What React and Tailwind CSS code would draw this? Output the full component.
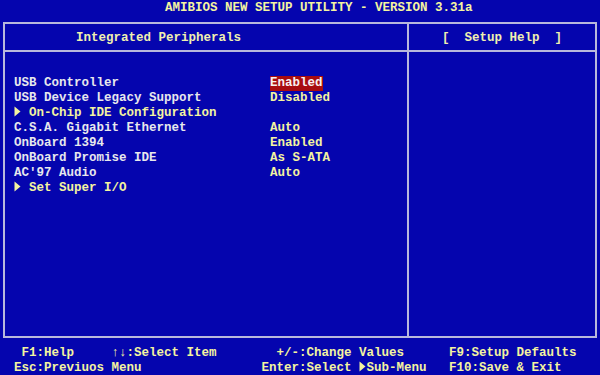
import React from 'react';

const items = [
    { label: 'USB Controller', value: 'Enabled', selected: true },
    { label: 'USB Device Legacy Support', value: 'Disabled' },
    { label: 'On-Chip IDE Configuration', submenu: true },
    { label: 'C.S.A. Gigabit Ethernet', value: 'Auto' },
    { label: 'OnBoard 1394', value: 'Enabled' },
    { label: 'OnBoard Promise IDE', value: 'As S-ATA' },
    { label: "AC'97 Audio", value: 'Auto' },
    { label: 'Set Super I/O', submenu: true },
];

function Arrow() {
    return (
        <span className="inline-block w-[1ch] align-middle">
            <svg width="7" height="11" viewBox="0 0 7 11" className="block -mt-[2px]">
                <path d="M0.5 0.5 L6.5 5.5 L0.5 10.5 Z" fill="#f4f4a0" />
            </svg>
        </span>
    );
}

function App() {
    return (
        <div
            className="w-[600px] h-[375px] bg-[#0505ae] overflow-hidden text-[12.5px] leading-[15px] font-bold whitespace-pre"
            style={{ fontFamily: '"Liberation Mono", "DejaVu Sans Mono", monospace' }}
        >
            <div className="h-[22px] pt-[1px] pl-[165px] text-[#f4f4a0]">AMIBIOS NEW SETUP UTILITY - VERSION 3.31a</div>

            <div className="ml-[3px] w-[594px] h-[316px] border-2 border-[#b8b8dc] flex">
                <div className="w-[404px] flex flex-col border-r-2 border-[#b8b8dc]">
                    <div className="h-[28px] flex items-center pt-[2px] pl-[71px] text-[#f0f0b0] border-b-2 border-[#b8b8dc]">
                        Integrated Peripherals
                    </div>
                    <div className="pt-[24px] pl-[9px]">
                        {items.map((item) => (
                            <div key={item.label} className="flex h-[15px]">
                                <div className={`w-[256px] ${item.submenu ? 'text-[#f4f4a0]' : 'text-[#e8e8ec]'}`}>
                                    {item.submenu ? (
                                        <>
                                            <Arrow /> {item.label}
                                        </>
                                    ) : (
                                        item.label
                                    )}
                                </div>
                                {item.value && (
                                    <div className={item.selected ? 'bg-[#a80c10] text-[#f8f0f0]' : 'text-[#f4f4a0]'}>
                                        {item.value}
                                    </div>
                                )}
                            </div>
                        ))}
                    </div>
                </div>
                <div className="flex-1 flex flex-col">
                    <div className="h-[28px] flex items-center pt-[2px] pl-[33px] text-[#f0f0b0] border-b-2 border-[#b8b8dc]">
                        [  Setup Help  ]
                    </div>
                </div>
            </div>

            <div className="pt-[8px] pl-[14px] text-[#f4f4a0]">
                <div> F1:Help     ↑↓:Select Item        +/-:Change Values      F9:Setup Defaults</div>
                <div>
                    Esc:Previuos Menu                Enter:Select <Arrow />Sub-Menu   F10:Save &amp; Exit
                </div>
            </div>
        </div>
    );
}

export default App;
